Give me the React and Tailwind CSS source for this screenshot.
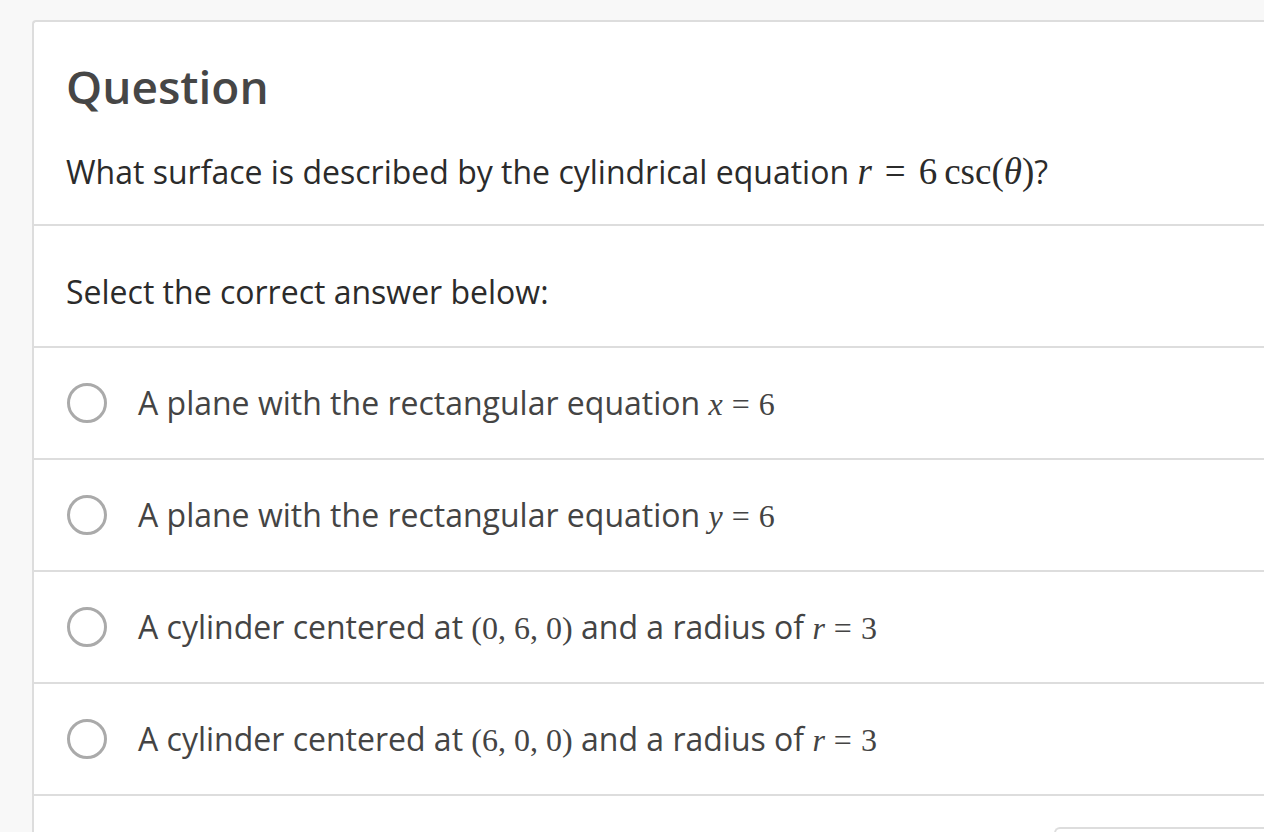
import React from "react";

function M({ children }) {
  return (
    <span className="font-['Liberation_Serif','Times_New_Roman',serif] text-[32px]">
      {children}
    </span>
  );
}

function Eq() {
  return <span className="mx-[9px]">=</span>;
}

const options = [
  {
    id: 1,
    text: (
      <>
        A plane with the rectangular equation{" "}
        <M>
          <i>x</i>
          <Eq />6
        </M>
      </>
    ),
  },
  {
    id: 2,
    text: (
      <>
        A plane with the rectangular equation{" "}
        <M>
          <i>y</i>
          <Eq />6
        </M>
      </>
    ),
  },
  {
    id: 3,
    text: (
      <>
        A cylinder centered at <M>(0, 6, 0)</M> and a radius of{" "}
        <M>
          <i>r</i>
          <Eq />3
        </M>
      </>
    ),
  },
  {
    id: 4,
    text: (
      <>
        A cylinder centered at <M>(6, 0, 0)</M> and a radius of{" "}
        <M>
          <i>r</i>
          <Eq />3
        </M>
      </>
    ),
  },
];

function App() {
  return (
    <div className="min-h-screen w-full bg-[#f8f8f8] pl-[32px] pt-[20px] overflow-hidden font-['Open_Sans',sans-serif]">
      <div className="bg-white border-l-2 border-t-2 border-[#dddddd] rounded-tl-[4px] min-h-[812px]">
        {/* header */}
        <div className="h-[204px] border-b-2 border-[#dddddd] pl-[32px] pt-[32px]">
          <h1 className="text-[46px] font-semibold text-[#464646] leading-[64px]">
            Question
          </h1>
          <p className="mt-[32px] text-[32px] text-[#2b2b2b] leading-[44px]">
            What surface is described by the cylindrical equation{" "}
            <span className="font-['Liberation_Serif','Times_New_Roman',serif] text-[37px]">
              <i>r</i>
              <span className="mx-[13px]">=</span>
              <span>6</span>
              <span className="ml-[7px]">csc(</span>
              <i>θ</i>
              <span>)</span>
            </span>
            ?
          </p>
        </div>

        <div className="h-[122px] border-b-2 border-[#dddddd] pl-[32px] pt-[12px] flex items-center">
          <p className="text-[32px] text-[#2b2b2b] leading-[44px]">
            Select the correct answer below:
          </p>
        </div>

        {options.map((o) => (
          <label
            key={o.id}
            className="h-[112px] border-b-2 border-[#dddddd] pl-[33px] flex items-center cursor-pointer"
          >
            <span className="w-[40px] h-[40px] rounded-full border-[3px] border-[#aaaaaa] shrink-0" />
            <span className="ml-[31px] text-[32px] text-[#444444] leading-[44px]">
              {o.text}
            </span>
          </label>
        ))}

        <div className="flex justify-end pt-[31px]">
          <div className="w-[210px] h-[20px] border-t-2 border-l-2 border-[#dddddd] rounded-tl-[6px]" />
        </div>
      </div>
    </div>
  );
}

export default App;
